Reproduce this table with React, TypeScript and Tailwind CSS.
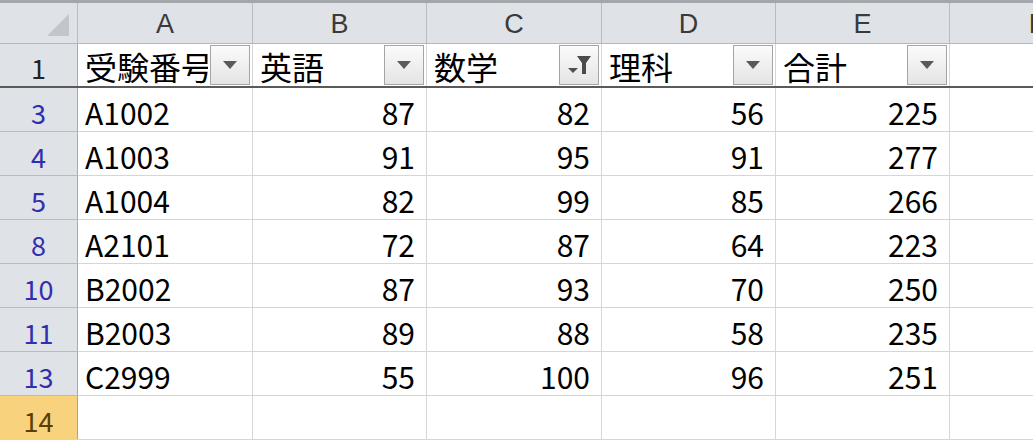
import React from 'react'

const COL_WIDTHS = ['w-[175px]', 'w-[174px]', 'w-[175px]', 'w-[174px]', 'w-[174px]']
const LETTERS = ['A', 'B', 'C', 'D', 'E']
const HEADERS = ['受験番号', '英語', '数学', '理科', '合計']

const ROWS: { n: number; id: string; vals: number[] }[] = [
  { n: 3, id: 'A1002', vals: [87, 82, 56, 225] },
  { n: 4, id: 'A1003', vals: [91, 95, 91, 277] },
  { n: 5, id: 'A1004', vals: [82, 99, 85, 266] },
  { n: 8, id: 'A2101', vals: [72, 87, 64, 223] },
  { n: 10, id: 'B2002', vals: [87, 93, 70, 250] },
  { n: 11, id: 'B2003', vals: [89, 88, 58, 235] },
  { n: 13, id: 'C2999', vals: [55, 100, 96, 251] },
]

const font = "font-['Noto_Sans_CJK_JP','DejaVu_Sans',sans-serif]"

function FilterButton({ active }: { active?: boolean }) {
  return (
    <div className="absolute right-[2px] top-[1px] w-[40px] h-[40px] border border-[#a5a5a5] bg-gradient-to-b from-[#fbfbfb] to-[#e4e4e4] flex items-center justify-center">
      {active ? (
        <svg width="28" height="24" viewBox="0 0 28 24">
          <path d="M3 15 H13 L8 20 Z" fill="#505050" />
          <path d="M12 3 H26 L21 10 V21 H17 V10 Z" fill="#4a4a4a" />
        </svg>
      ) : (
        <svg width="14" height="8" viewBox="0 0 14 8">
          <path d="M0 0 H14 L7 8 Z" fill="#5a5a5a" />
        </svg>
      )}
    </div>
  )
}

export default function App() {
  return (
    <div className={`w-[1033px] h-[441px] overflow-hidden bg-white leading-none ${font}`}>
      {/* column headers */}
      <div className="flex h-[44px] bg-[#dfe2e7] border-t-[3px] border-[#a3a6aa] border-b border-b-[#b4b8bd]">
        <div className="w-[78px] shrink-0 border-r border-[#b8bcc1] relative">
          <svg className="absolute left-[47px] top-[11px]" width="22" height="22" viewBox="0 0 22 22">
            <path d="M22 0 V22 H0 Z" fill="#c2c6cb" />
          </svg>
        </div>
        {LETTERS.map((l, i) => (
          <div key={l} className={`${COL_WIDTHS[i]} shrink-0 border-r border-[#b8bcc1] flex items-center justify-center pt-[2px] text-[27px] text-[#3a3a3a] font-['Liberation_Sans',sans-serif]`}>
            {l}
          </div>
        ))}
        <div className="w-[174px] shrink-0 flex items-center justify-center pt-[2px] text-[27px] text-[#3a3a3a] font-['Liberation_Sans',sans-serif]">F</div>
      </div>

      {/* row 1: headings with filters */}
      <div className="flex h-[44px] border-b-2 border-[#5a5a5a]">
        <div className="w-[78px] shrink-0 bg-[#dfe2e7] border-r border-[#a6abb1] flex items-center justify-center pt-[4px] text-[27px] text-[#222]">1</div>
        {HEADERS.map((h, i) => (
          <div key={h} className={`${COL_WIDTHS[i]} shrink-0 relative border-r border-[#d6d6d6]`}>
            <div className={`ml-[7px] mr-[44px] pt-[2px] h-full flex items-center text-[32px] text-black whitespace-nowrap ${i === 0 ? 'overflow-hidden' : ''}`}>{h}</div>
            <FilterButton active={i === 2} />
          </div>
        ))}
        <div className="flex-1" />
      </div>

      {/* data rows */}
      {ROWS.map(r => (
        <div key={r.n} className="flex h-[44px] border-b border-[#d6d6d6]">
          <div className="w-[78px] shrink-0 bg-[#dfe2e7] border-r border-[#a6abb1] border-b border-b-[#b8bcc1] -mb-px flex items-center justify-center pt-[5px] text-[27px] text-[#2f2fb0]">
            {r.n}
          </div>
          <div className={`${COL_WIDTHS[0]} shrink-0 border-r border-[#d6d6d6] pl-[7px] pt-[5px] flex items-center text-[30px] text-black`}>{r.id}</div>
          {r.vals.map((v, i) => (
            <div key={i} className={`${COL_WIDTHS[i + 1]} shrink-0 border-r border-[#d6d6d6] pr-[11px] pt-[5px] flex items-center justify-end text-[30px] text-black`}>
              {v}
            </div>
          ))}
          <div className="flex-1" />
        </div>
      ))}

      {/* row 14 (active) */}
      <div className="flex h-[44px] border-b border-[#d6d6d6]">
        <div className="w-[78px] shrink-0 bg-[#f8d27c] border-r border-[#c9a24a] flex items-center justify-center pt-[5px] text-[27px] text-[#5a3f00]">14</div>
        {COL_WIDTHS.map((w, i) => (
          <div key={i} className={`${w} shrink-0 border-r border-[#d6d6d6]`} />
        ))}
        <div className="flex-1" />
      </div>
    </div>
  )
}
